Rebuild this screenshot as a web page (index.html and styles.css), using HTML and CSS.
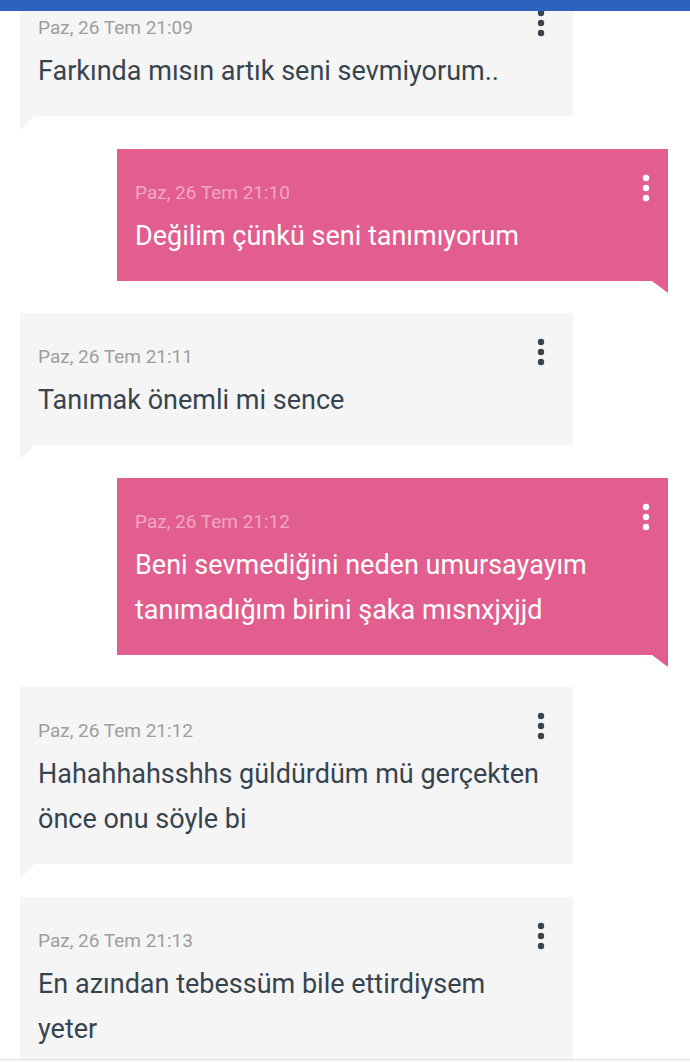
FILE: index.html
```html
<!DOCTYPE html>
<html lang="tr">
<head>
  <meta charset="UTF-8" />
  <meta name="viewport" content="width=device-width, initial-scale=1.0"/>
  <title>Mesajlar</title>
  <link rel="stylesheet" href="styles.css">
</head>
<body>

  <div class="topbar"></div>

  <div class="chat">
    <div class="msg received">
      <div class="msg-head">
        <span class="time">Paz, 26 Tem 21:09</span>
        <button class="menu" aria-label="Menü">
          <svg width="8" height="28" viewBox="0 0 8 28"><circle cx="4" cy="4" r="3.2"/><circle cx="4" cy="14" r="3.2"/><circle cx="4" cy="24" r="3.2"/></svg>
        </button>
      </div>
      <div class="text">Farkında mısın artık seni sevmiyorum..</div>
    </div>

    <div class="msg sent">
      <div class="msg-head">
        <span class="time">Paz, 26 Tem 21:10</span>
        <button class="menu" aria-label="Menü">
          <svg width="8" height="28" viewBox="0 0 8 28"><circle cx="4" cy="4" r="3.2"/><circle cx="4" cy="14" r="3.2"/><circle cx="4" cy="24" r="3.2"/></svg>
        </button>
      </div>
      <div class="text">Değilim çünkü seni tanımıyorum</div>
    </div>

    <div class="msg received">
      <div class="msg-head">
        <span class="time">Paz, 26 Tem 21:11</span>
        <button class="menu" aria-label="Menü">
          <svg width="8" height="28" viewBox="0 0 8 28"><circle cx="4" cy="4" r="3.2"/><circle cx="4" cy="14" r="3.2"/><circle cx="4" cy="24" r="3.2"/></svg>
        </button>
      </div>
      <div class="text">Tanımak önemli mi sence</div>
    </div>

    <div class="msg sent">
      <div class="msg-head">
        <span class="time">Paz, 26 Tem 21:12</span>
        <button class="menu" aria-label="Menü">
          <svg width="8" height="28" viewBox="0 0 8 28"><circle cx="4" cy="4" r="3.2"/><circle cx="4" cy="14" r="3.2"/><circle cx="4" cy="24" r="3.2"/></svg>
        </button>
      </div>
      <div class="text">Beni sevmediğini neden umursayayım tanımadığım birini şaka mısnxjxjjd</div>
    </div>

    <div class="msg received">
      <div class="msg-head">
        <span class="time">Paz, 26 Tem 21:12</span>
        <button class="menu" aria-label="Menü">
          <svg width="8" height="28" viewBox="0 0 8 28"><circle cx="4" cy="4" r="3.2"/><circle cx="4" cy="14" r="3.2"/><circle cx="4" cy="24" r="3.2"/></svg>
        </button>
      </div>
      <div class="text">Hahahhahsshhs güldürdüm mü gerçekten önce onu söyle bi</div>
    </div>

    <div class="msg received">
      <div class="msg-head">
        <span class="time">Paz, 26 Tem 21:13</span>
        <button class="menu" aria-label="Menü">
          <svg width="8" height="28" viewBox="0 0 8 28"><circle cx="4" cy="4" r="3.2"/><circle cx="4" cy="14" r="3.2"/><circle cx="4" cy="24" r="3.2"/></svg>
        </button>
      </div>
      <div class="text">En azından tebessüm bile ettirdiysem yeter</div>
    </div>
  </div>

  <div class="bottombar"></div>

</body>
</html>
```

FILE: styles.css
```css
body {
  margin: 0;
  font-family: Roboto, "Noto Sans", Arial, sans-serif;
  background: #fff;
  height: 1062px;
  overflow: hidden;
}

.topbar {
  position: fixed;
  top: 0;
  left: 0;
  right: 0;
  height: 11px;
  background-color: #2d63c0;
  z-index: 2;
}

.bottombar {
  position: fixed;
  left: 0;
  right: 0;
  bottom: 0;
  height: 2px;
  border-top: 1px solid #e4e4e4;
  background: #f7f7f7;
  z-index: 2;
}

.chat {
  display: flex;
  flex-direction: column;
  gap: 32.5px;
  margin-top: -16px;
}

.msg {
  position: relative;
  box-sizing: border-box;
  padding: 32px 0 22px 18px;
}

.msg-head {
  display: flex;
  align-items: flex-start;
  justify-content: space-between;
  height: 24px;
  margin-bottom: 9px;
}

.time {
  font-size: 19px;
  line-height: 24px;
}

.text {
  font-size: 27px;
  line-height: 45px;
}

.menu {
  background: none;
  border: none;
  padding: 0;
  margin-top: -7px;
  width: 8px;
  cursor: pointer;
}

.menu svg {
  display: block;
}

/* gelen mesaj */
.received {
  margin-left: 20px;
  width: 553px;
  background: #f5f5f5;
  padding-right: 28px;
}

.received .time {
  color: #9e9e9e;
}

.received .text {
  color: #37444f;
}

.received .menu svg {
  fill: #37444f;
}

.received::after {
  content: "";
  position: absolute;
  left: 0;
  top: 100%;
  border-top: 15px solid #f5f5f5;
  border-right: 15px solid transparent;
}

/* giden mesaj */
.sent {
  margin-left: 117px;
  margin-right: 22px;
  background: #e15e8e;
  padding-right: 18px;
}

.sent .time {
  color: #f3a6c3;
}

.sent .text {
  color: #fff;
}

.sent .menu svg {
  fill: #fff;
}

.sent::after {
  content: "";
  position: absolute;
  right: 0;
  top: 100%;
  border-top: 12px solid #e15e8e;
  border-left: 16px solid transparent;
}
```
